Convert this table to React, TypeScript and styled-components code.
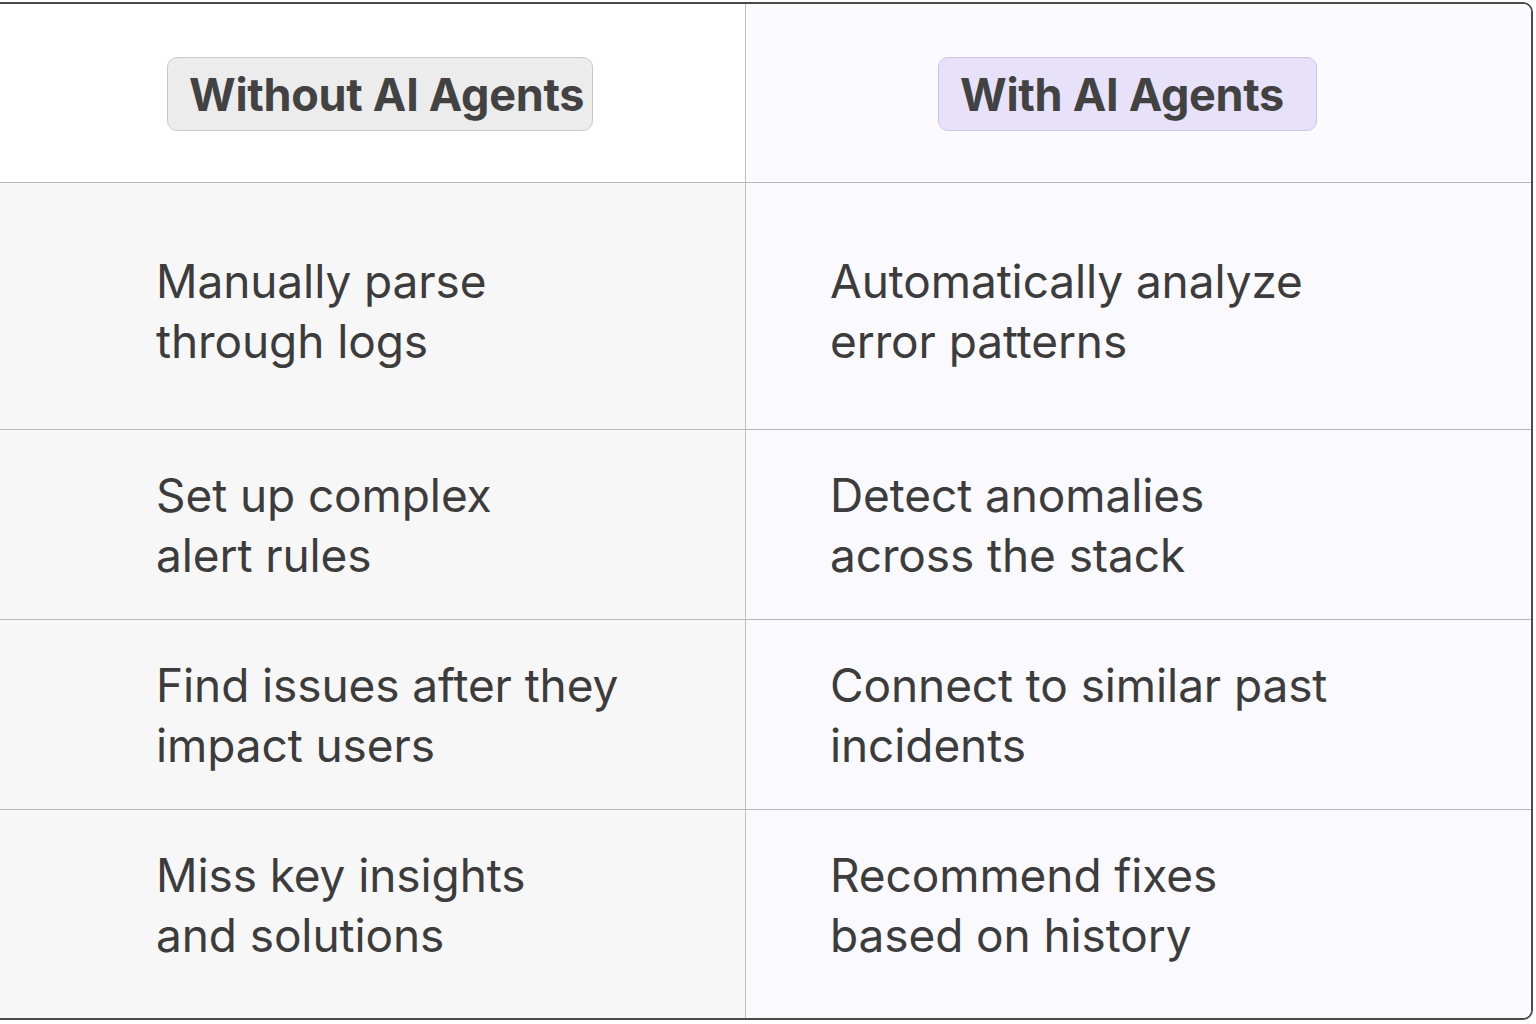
import React from "react";
import styled, { createGlobalStyle } from "styled-components";

const Global = createGlobalStyle`
  html, body { margin: 0; padding: 0; background: #ffffff; }
  body { font-family: Inter, "Noto Sans", "Liberation Sans", sans-serif; }
`;

const Table = styled.div`
  box-sizing: border-box;
  margin: 2px 0 0 -3px;
  width: 1536px;
  height: 1018px;
  border: 2px solid #4a4a4a;
  border-radius: 0 10px 10px 0;
  overflow: hidden;
  display: grid;
  grid-template-columns: 746px 1fr;
  grid-template-rows: 179px 247px 190px 190px 1fr;
`;

const HeaderCell = styled.div<{ $ai?: boolean }>`
  display: flex;
  align-items: center;
  padding-left: ${(p) => (p.$ai ? "192px" : "168px")};
  padding-top: 2px;
  background: ${(p) => (p.$ai ? "#fbfaff" : "#ffffff")};
  border-bottom: 1.5px solid #b8b8b8;
  border-left: ${(p) => (p.$ai ? "1.5px solid #bfbfbf" : "none")};
`;

const Badge = styled.span<{ $ai?: boolean }>`
  display: inline-flex;
  align-items: center;
  box-sizing: border-box;
  height: 74px;
  padding: 0 ${(p) => (p.$ai ? "32px" : "8px")} 0 21px;
  border-radius: 10px;
  border: 1.5px solid ${(p) => (p.$ai ? "#cbc3ea" : "#c9c9c9")};
  background: ${(p) => (p.$ai ? "#e7e2f9" : "#ececec")};
  color: #424242;
  font-size: 45px;
  font-weight: 700;
  letter-spacing: -0.3px;
  white-space: nowrap;
`;

const BodyCell = styled.div<{ $ai?: boolean; $first?: boolean; $last?: boolean }>`
  display: flex;
  align-items: center;
  padding-left: ${(p) => (p.$ai ? "84px" : "157px")};
  padding-top: ${(p) => (p.$first ? "10px" : "0")};
  padding-bottom: ${(p) => (p.$last ? "18px" : "0")};
  background: ${(p) => (p.$ai ? "#faf9fd" : "#f7f7f7")};
  border-bottom: ${(p) => (p.$last ? "none" : "1.5px solid #b8b8b8")};
  border-left: ${(p) => (p.$ai ? "1.5px solid #bfbfbf" : "none")};
`;

const CellText = styled.p`
  margin: 0;
  color: #3c3c3c;
  font-size: 46px;
  font-weight: 400;
  line-height: 60px;
  letter-spacing: -0.1px;
`;

const rows: [string[], string[]][] = [
  [["Manually parse", "through logs"], ["Automatically analyze", "error patterns"]],
  [["Set up complex", "alert rules"], ["Detect anomalies", "across the stack"]],
  [["Find issues after they", "impact users"], ["Connect to similar past", "incidents"]],
  [["Miss key insights", "and solutions"], ["Recommend fixes", "based on history"]],
];

const Lines = ({ lines }: { lines: string[] }) => (
  <CellText>
    {lines.map((l, i) => (
      <React.Fragment key={i}>
        {l}
        {i < lines.length - 1 && <br />}
      </React.Fragment>
    ))}
  </CellText>
);

export default function App() {
  return (
    <>
      <Global />
      <Table>
        <HeaderCell>
          <Badge>Without AI Agents</Badge>
        </HeaderCell>
        <HeaderCell $ai>
          <Badge $ai>With AI Agents</Badge>
        </HeaderCell>
        {rows.map(([a, b], i) => (
          <React.Fragment key={i}>
            <BodyCell $first={i === 0} $last={i === rows.length - 1}>
              <Lines lines={a} />
            </BodyCell>
            <BodyCell $ai $first={i === 0} $last={i === rows.length - 1}>
              <Lines lines={b} />
            </BodyCell>
          </React.Fragment>
        ))}
      </Table>
    </>
  );
}
